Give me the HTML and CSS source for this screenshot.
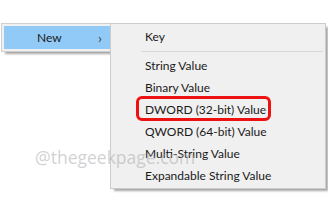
FILE: index.html
```html
<!DOCTYPE html>
<html>
<head>
<meta charset="utf-8">
<link rel="stylesheet" href="styles.css">
</head>
<body>
<div class="stage">
  <div class="menu-left">
    <div class="item-new">
      <span class="label">New</span>
      <span class="chev">&#8250;</span>
    </div>
  </div>
  <div class="menu-right">
    <div class="row">Key</div>
    <div class="sep"></div>
    <div class="row">String Value</div>
    <div class="row">Binary Value</div>
    <div class="row hl">DWORD (32-bit) Value<span class="ring"></span></div>
    <div class="row">QWORD (64-bit) Value</div>
    <div class="row">Multi-String Value</div>
    <div class="row">Expandable String Value</div>
  </div>
  <div class="watermark">@thegeekpage.com</div>
</div>
</body>
</html>
```

FILE: styles.css
```css
html, body {
  margin: 0;
  padding: 0;
  background: #ffffff;
}
body {
  width: 328px;
  height: 209px;
  overflow: hidden;
  font-family: "Lato", "Noto Sans", sans-serif;
  font-size: 12px;
  color: #1a1a1a;
}
.stage {
  position: relative;
  display: flex;
  align-items: flex-start;
  padding: 23px 0 0 1px;
}
.menu-left {
  width: 106px;
  height: 25px;
  border: 1px solid #cfcfcf;
  border-right: none;
  background: #f0f0f0;
  padding: 2px 0 0 2px;
  box-sizing: content-box;
  box-shadow: 3px 3px 2px -1px rgba(0,0,0,0.35);
}
.item-new {
  height: 23px;
  background: #91c9f7;
  display: flex;
  align-items: center;
}
.item-new .label {
  margin-left: 33px;
  flex: 1;
}
.item-new .chev {
  margin-right: 8px;
  font-size: 14px;
  color: #444;
  line-height: 1;
}
.menu-right {
  width: 214px;
  border: 1px solid #cccccc;
  background: #f0f0f0;
  padding: 2px 0 1px 0;
  box-shadow: 3px 3px 2px -1px rgba(0,0,0,0.35);
  position: relative;
  z-index: 1;
}
.row {
  position: relative;
  height: 22px;
  line-height: 22px;
  padding-left: 34px;
  white-space: nowrap;
}
.sep {
  height: 1px;
  background: #d7d7d7;
  margin: 3px 2px 3px 30px;
}
.ring {
  position: absolute;
  left: 25px;
  top: -3px;
  width: 135px;
  height: 25px;
  border: 3px solid #ee1111;
  border-radius: 6px;
  box-sizing: border-box;
}
.watermark {
  position: absolute;
  left: 35px;
  top: 145px;
  font-family: "Open Sans", "Noto Sans", sans-serif;
  font-size: 17.5px;
  color: rgba(170,170,170,0.55);
  z-index: 2;
  white-space: nowrap;
}
```
